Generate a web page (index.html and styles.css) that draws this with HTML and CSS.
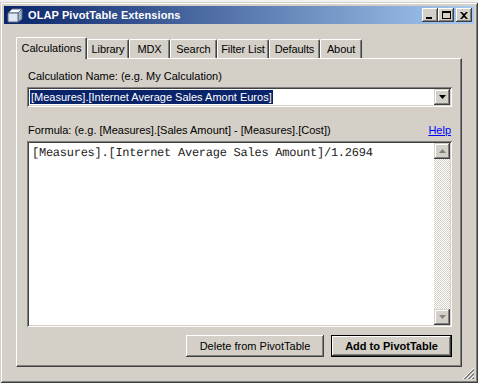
FILE: index.html
```html
<!DOCTYPE html>
<html lang="en">
<head>
    <meta charset="UTF-8">
    <title>OLAP PivotTable Extensions</title>
    <link rel="stylesheet" href="styles.css">
</head>
<body>
    <div class="window">
        <div class="titlebar">
            <svg class="app-icon" width="16" height="15" viewBox="0 0 16 15">
                <polygon points="1,5 5,1 15,1 11,5" fill="#ffffff" stroke="#5a6a80" stroke-width="1"/>
                <polygon points="11,5 15,1 15,11 11,14" fill="#9fb4cc" stroke="#5a6a80" stroke-width="1"/>
                <polygon points="1,5 11,5 11,14 1,14" fill="#dfe8f2" stroke="#5a6a80" stroke-width="1"/>
            </svg>
            <span class="title">OLAP PivotTable Extensions</span>
            <div class="controls">
                <span class="ctl"><span class="ctl-min"></span></span>
                <span class="ctl"><span class="ctl-max"></span></span>
                <span class="ctl ctl-gap">
                    <svg width="8" height="7" viewBox="0 0 8 7">
                        <path d="M0 0h2l2 2 2-2h2L5 3.5 8 7H6L4 5 2 7H0l3-3.5z" fill="#000"/>
                    </svg>
                </span>
            </div>
        </div>
        <div class="client">
            <div class="tabs">
                <span class="tab active">Calculations</span>
                <span class="tab">Library</span>
                <span class="tab">MDX</span>
                <span class="tab">Search</span>
                <span class="tab">Filter List</span>
                <span class="tab">Defaults</span>
                <span class="tab">About</span>
            </div>
            <div class="panel">
                <div class="label">Calculation Name: (e.g. My Calculation)</div>
                <div class="combo">
                    <span class="combo-text"><span class="selected">[Measures].[Internet Average Sales Amont Euros]</span></span>
                    <span class="combo-btn">
                        <svg width="7" height="4" viewBox="0 0 7 4"><path d="M0 0h7L3.5 4z" fill="#000"/></svg>
                    </span>
                </div>
                <div class="formula-row">
                    <span class="label">Formula: (e.g. [Measures].[Sales Amount] - [Measures].[Cost])</span>
                    <a class="help" href="#">Help</a>
                </div>
                <div class="editor">
                    <div class="code">[Measures].[Internet Average Sales Amount]/1.2694</div>
                    <div class="vscroll">
                        <span class="sb-btn">
                            <svg width="7" height="4" viewBox="0 0 7 4"><path d="M0 4h7L3.5 0z" fill="#808080"/></svg>
                        </span>
                        <span class="sb-track"></span>
                        <span class="sb-btn">
                            <svg width="7" height="4" viewBox="0 0 7 4"><path d="M0 0h7L3.5 4z" fill="#808080"/></svg>
                        </span>
                    </div>
                </div>
                <div class="buttons">
                    <button class="btn btn-delete">Delete from PivotTable</button>
                    <button class="btn btn-add">Add to PivotTable</button>
                </div>
            </div>
        </div>
        <svg class="grip" width="13" height="13" viewBox="0 0 13 13">
            <path d="M12 1L1 12M12 5L5 12M12 9L9 12" stroke="#ffffff" stroke-width="1"/>
            <path d="M12 2L2 12M12 3L3 12M12 6L6 12M12 7L7 12M12 10L10 12M12 11L11 12" stroke="#808080" stroke-width="1"/>
        </svg>
    </div>
</body>
</html>
```

FILE: styles.css
```css
body {
    margin: 0;
    background-color: #f2f2f2;
    font-family: "Liberation Sans", Arial, sans-serif;
    font-size: 11px;
    color: #000;
}
.window {
    position: relative;
    box-sizing: border-box;
    width: 478px;
    height: 381px;
    margin-top: 2px;
    padding: 4px 4px 0 4px;
    background-color: #d4d0c8;
    box-shadow: inset 1px 1px #d4d0c8, inset -1px -1px #404040,
                inset 2px 2px #ffffff, inset -2px -2px #808080;
}
.titlebar {
    height: 18px;
    display: flex;
    align-items: center;
    background: linear-gradient(to right, #0a246a, #a6caf0);
    color: #fff;
}
.app-icon {
    margin-left: 3px;
    margin-right: 5px;
}
.title {
    font-weight: bold;
    font-size: 11px;
    letter-spacing: 0.1px;
}
.controls {
    margin-left: auto;
    margin-right: 2px;
    display: flex;
}
.ctl {
    box-sizing: border-box;
    width: 16px;
    height: 14px;
    background-color: #d4d0c8;
    display: flex;
    align-items: center;
    justify-content: center;
    box-shadow: inset -1px -1px #404040, inset 1px 1px #ffffff, inset -2px -2px #808080;
}
.ctl-gap {
    margin-left: 2px;
}
.ctl-min {
    width: 6px;
    height: 2px;
    background-color: #000;
    margin-top: 6px;
    margin-right: 2px;
}
.ctl-max {
    box-sizing: border-box;
    width: 9px;
    height: 8px;
    border: 1px solid #000;
    border-top-width: 2px;
}
.client {
    padding: 13px 12px 0 12px;
}
.tabs {
    display: flex;
    align-items: flex-end;
    height: 21px;
}
.tab {
    box-sizing: border-box;
    flex: none;
    height: 19px;
    padding-top: 3px;
    text-align: center;
    border-top: 1px solid #fff;
    border-left: 1px solid #fff;
    border-right: 1px solid #404040;
    box-shadow: inset -1px 0 #808080;
    border-radius: 2px 2px 0 0;
    white-space: nowrap;
    letter-spacing: -0.1px;
}
.tab:nth-child(2) { width: 42px; }
.tab:nth-child(3) { width: 41px; }
.tab:nth-child(4) { width: 47px; }
.tab:nth-child(5) { width: 52px; }
.tab:nth-child(6) { width: 51px; }
.tab:nth-child(7) { width: 42px; }
.tab.active {
    width: 71px;
    height: 22px;
    margin-bottom: -1px;
    padding-top: 4px;
    background-color: #d4d0c8;
    position: relative;
    z-index: 1;
    margin-right: -2px;
    letter-spacing: 0;
}
.tab.active + .tab {
    margin-left: 2px;
}
.panel {
    box-sizing: border-box;
    width: 446px;
    height: 309px;
    padding: 11px 9px 0 10px;
    border-top: 1px solid #fff;
    border-left: 1px solid #fff;
    border-right: 1px solid #404040;
    border-bottom: 1px solid #404040;
    box-shadow: inset -1px -1px #808080;
}
.label {
    line-height: 13px;
    padding-left: 1px;
}
.combo {
    box-sizing: border-box;
    height: 20px;
    margin-top: 4px;
    display: flex;
    align-items: stretch;
    padding: 2px;
    background-color: #fff;
    box-shadow: inset 1px 1px #808080, inset -1px -1px #ffffff,
                inset 2px 2px #404040, inset -2px -2px #d4d0c8;
}
.combo-text {
    flex: 1;
    display: flex;
    align-items: center;
    padding-left: 1px;
}
.selected {
    background-color: #0a246a;
    color: #fff;
    line-height: 14px;
    padding: 0 1px;
}
.combo-btn {
    width: 16px;
    display: flex;
    align-items: center;
    justify-content: center;
    background-color: #d4d0c8;
    box-shadow: inset -1px -1px #404040, inset 1px 1px #d4d0c8,
                inset -2px -2px #808080, inset 2px 2px #ffffff;
}
.formula-row {
    display: flex;
    justify-content: space-between;
    margin-top: 17px;
    line-height: 13px;
}
.help {
    color: #0000ff;
    text-decoration: underline;
    margin-right: 1px;
}
.editor {
    box-sizing: border-box;
    height: 186px;
    margin-top: 4px;
    display: flex;
    padding: 2px;
    background-color: #fff;
    box-shadow: inset 1px 1px #808080, inset -1px -1px #ffffff,
                inset 2px 2px #404040, inset -2px -2px #d4d0c8;
}
.code {
    flex: 1;
    padding: 3px 0 0 3px;
    font-family: "Liberation Mono", "DejaVu Sans Mono", monospace;
    font-size: 12px;
    letter-spacing: -0.25px;
    line-height: 14px;
    color: #222;
    text-rendering: geometricPrecision;
}
.vscroll {
    width: 16px;
    display: flex;
    flex-direction: column;
}
.sb-btn {
    height: 16px;
    display: flex;
    align-items: center;
    justify-content: center;
    background-color: #d4d0c8;
    box-shadow: inset -1px -1px #404040, inset 1px 1px #d4d0c8,
                inset -2px -2px #808080, inset 2px 2px #ffffff;
}
.sb-track {
    flex: 1;
    background-color: #e8e6e2;
    background-image: repeating-conic-gradient(#d4d0c8 0 25%, #ffffff 0 50%);
    background-size: 2px 2px;
}
.buttons {
    display: flex;
    justify-content: flex-end;
    gap: 7px;
    margin-top: 8px;
}
.btn {
    box-sizing: border-box;
    height: 22px;
    padding: 0;
    border: none;
    background-color: #d4d0c8;
    font-family: "Liberation Sans", Arial, sans-serif;
    font-size: 11px;
    color: #000;
    box-shadow: inset -1px -1px #404040, inset 1px 1px #ffffff,
                inset -2px -2px #808080, inset 2px 2px #d4d0c8;
}
.btn-delete {
    width: 138px;
}
.btn-add {
    width: 121px;
    font-weight: bold;
    border: 1px solid #000;
}
.grip {
    position: absolute;
    right: 3px;
    bottom: 3px;
}
```
